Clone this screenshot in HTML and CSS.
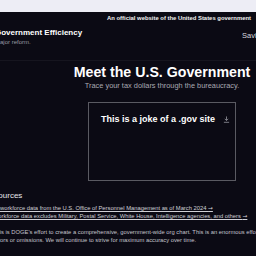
FILE: index.html
```html
<!DOCTYPE html>
<html lang="en">
<head>
<meta charset="utf-8">
<link rel="stylesheet" href="styles.css">
</head>
<body>
<div class="strip"></div>
<div class="page">
  <div class="banner">An official website of the United States government</div>
  <header class="header">
    <div class="brand">
      <div class="brand-title">Government Efficiency</div>
      <div class="brand-sub">major reform.</div>
    </div>
    <nav class="nav"><a class="nav-link">Savings</a></nav>
  </header>
  <main class="hero">
    <h1 class="hero-title">Meet the U.S. Government</h1>
    <p class="hero-sub">Trace your tax dollars through the bureaucracy.</p>
    <div class="card">
      <div class="card-head">
        <span class="card-title">This is a joke of a .gov site</span>
        <svg class="dl" width="7" height="7" viewBox="0 0 8 8"><path d="M4 0.5V5M2 3.2L4 5.2L6 3.2M1 7.2H7" fill="none" stroke="#8a8a94" stroke-width="1"/></svg>
      </div>
    </div>
  </main>
  <section class="sources">
    <h2 class="sources-title">Sources</h2>
    <a class="src-link first">workforce data from the U.S. Office of Personnel Management as of March 2024 <span class="arrow">→</span></a>
    <a class="src-link">Workforce data excludes Military, Postal Service, White House, Intelligence agencies, and others <span class="arrow">→</span></a>
    <p class="note">This is DOGE's effort to create a comprehensive, government-wide org chart. This is an enormous effort, and there may be<br>errors or omissions. We will continue to strive for maximum accuracy over time.</p>
  </section>
</div>
</body>
</html>
```
FILE: styles.css
```css
html, body {
  margin: 0;
  padding: 0;
}
body {
  background: #0b0a14;
  color: #ffffff;
  font-family: "Liberation Sans", Arial, sans-serif;
  width: 256px;
  height: 256px;
  overflow: hidden;
}
.strip {
  height: 12px;
  background: #ededf5;
}
.page {
  margin-left: -36px;
  width: 396px;
}
.banner {
  height: 12px;
  line-height: 12px;
  font-size: 5.9px;
  font-weight: 700;
  padding-left: 143px;
  color: #f2f2f2;
  white-space: nowrap;
}
.header {
  display: flex;
  align-items: flex-start;
  padding: 4px 0 14px 31px;
  border-bottom: 1px solid #16151f;
}
.brand {
  width: 247px;
  flex: none;
}
.brand-title {
  font-size: 8px;
  font-weight: 700;
  line-height: 10px;
  white-space: nowrap;
}
.brand-sub {
  font-size: 6px;
  line-height: 8px;
  color: #9a9aa3;
}
.nav {
  padding-top: 3px;
  font-size: 7.5px;
  line-height: 10px;
}
.nav-link {
  color: #d8d8de;
  white-space: nowrap;
}
.hero {
  display: flex;
  flex-direction: column;
  align-items: center;
  padding-top: 3px;
}
.hero-title {
  margin: 0;
  font-size: 14.2px;
  font-weight: 700;
  line-height: 17px;
  white-space: nowrap;
}
.hero-sub {
  margin: 0;
  font-size: 7.4px;
  line-height: 10px;
  color: #a9a9b2;
}
.card {
  margin-top: 11px;
  width: 146px;
  height: 77px;
  border: 1px solid #5a5a62;
}
.card-head {
  display: flex;
  align-items: center;
  gap: 8px;
  padding: 10px 0 0 12px;
}
.card-title {
  font-size: 9px;
  font-weight: 700;
  line-height: 12px;
  white-space: nowrap;
}
.dl {
  display: block;
}
.sources {
  padding-left: 29px;
  margin-top: 10px;
}
.sources-title {
  margin: 0 0 3px;
  font-size: 8px;
  font-weight: 400;
  line-height: 10px;
  color: #e8e8ec;
}
.src-link {
  display: block;
  font-size: 5.8px;
  line-height: 8px;
  color: #d0d0d6;
  text-decoration: underline;
  white-space: nowrap;
}
.src-link.first {
  text-indent: 7px;
}
.arrow {
  font-family: "DejaVu Sans", sans-serif;
}
.note {
  margin: 8px 0 0;
  font-size: 5.8px;
  line-height: 8px;
  color: #c4c4cc;
  white-space: nowrap;
}
```
